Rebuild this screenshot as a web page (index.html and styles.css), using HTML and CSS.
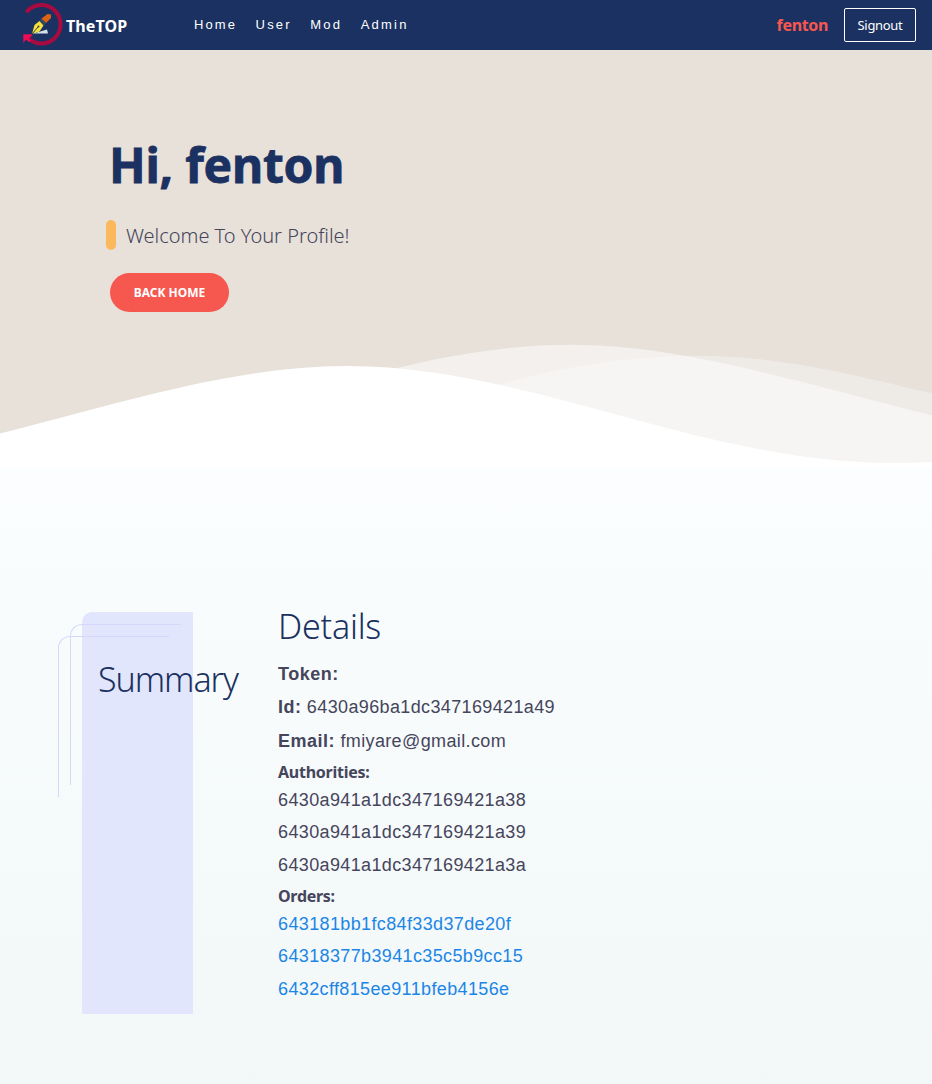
FILE: index.html
```html
<!DOCTYPE html>
<html lang="en">
<head>
<meta charset="utf-8">
<title>TheTOP - Profile</title>
<link rel="stylesheet" href="styles.css">
</head>
<body>
<header class="navbar">
  <a class="brand">
    <svg class="logo" width="44" height="48" viewBox="0 0 44 48">
      <path d="M6.500 10A19.200 19.200 0 1 1 7.500 37.500" fill="none" stroke="#a80b40" stroke-width="4" stroke-linecap="round"/>
      <path d="M2.300 42V33.300H11.300V34.500L7.500 37.500 10 39.500 8 41 5 38.500z" fill="#f00b55"/>
      <path d="M12.500 32.500L26 28.500l1 4z" fill="#d5e2e9"/>
      <path d="M11 33l2.500-9 5-4 4 4.500-4 6z" fill="#f7e23b"/>
      <path d="M11 33l6-7" stroke="#27435c" stroke-width="1"/>
      <circle cx="17.500" cy="25.500" r="1" fill="#27435c"/>
      <path d="M18.500 19.500l2-2 4.500 5-2 2z" fill="#344c60"/>
      <path d="M20.500 17.500L26.500 13l3.500.5v3.500L25 22z" fill="#dc6112"/>
    </svg>
    <span class="brand-name">TheTOP</span>
  </a>
  <nav class="links"><a>Home</a><a>User</a><a>Mod</a><a>Admin</a></nav>
  <div class="account"><span class="user">fenton</span><button class="signout">Signout</button></div>
</header>
<section class="hero">
  <div class="hero-copy">
    <h1>Hi, fenton</h1>
    <p class="lead"><span class="accent"></span><span class="lead-text">Welcome To Your Profile!</span></p>
    <a class="home-button">BACK HOME</a>
  </div>
  <svg class="waves" width="932" height="128" viewBox="0 340 932 128">
    <path d="M500 384C566 366 630 355.700 696 355.700C780 355.700 850 374 932 393.300V468H500z" fill="#fbffff" fill-opacity=".32"/>
    <path d="M350 380C430 358 500 344.700 572 344.700C680 344.700 796 381 932 415.500V468H350z" fill="#fff" fill-opacity=".5"/>
    <path d="M0 433.500C117 404 233 366 347 366C530 366 700 463 893 463Q912 463 932 461.700V468H0z" fill="#fff"/>
  </svg>
</section>
<main class="profile">
  <aside class="summary">
    <span class="frame frame-inner"></span>
    <span class="frame frame-outer"></span>
    <h2 class="summary-title">Summary</h2>
  </aside>
  <section class="details">
    <h2 class="details-title">Details</h2>
    <p class="field"><strong>Token:</strong></p>
    <p class="field"><strong>Id:</strong> 6430a96ba1dc347169421a49</p>
    <p class="field"><strong>Email:</strong> fmiyare@gmail.com</p>
    <h3 class="auth-title">Authorities:</h3>
    <ul class="list"><li>6430a941a1dc347169421a38</li><li>6430a941a1dc347169421a39</li><li>6430a941a1dc347169421a3a</li></ul>
    <h3 class="orders-title">Orders:</h3>
    <ul class="list orders"><li>643181bb1fc84f33d37de20f</li><li>64318377b3941c35c5b9cc15</li><li>6432cff815ee911bfeb4156e</li></ul>
  </section>
</main>
</body>
</html>
```
FILE: styles.css
```css
* { box-sizing: border-box; }
body { margin: 0; color: #45455b; font-family: "Liberation Sans", Arial, sans-serif; background: #fff; }
h1, h2, h3, p, ul { margin: 0; padding: 0; }
ul { list-style: none; }
.navbar { display: flex; align-items: center; height: 50px; padding: 0 16px 0 21px; background: #1a3161; color: #fff; }
.brand { display: flex; align-items: center; width: 173px; }
.logo { display: block; flex: none; margin-top: -1px; }
.brand-name { margin: 1px 0 0 1px; font: 700 16px/22px "Noto Sans", sans-serif; letter-spacing: .1px; }
.links { display: flex; gap: 17px; font-size: 13px; line-height: 20px; letter-spacing: 2.1px; }
.links a:nth-child(n+2) { letter-spacing: 2.2px; margin-left: 1.5px; }
.account { display: flex; align-items: center; gap: 16px; margin-left: auto; font-family: "Noto Sans", sans-serif; }
.user { color: #f6574f; font-size: 16px; font-weight: 700; letter-spacing: -.35px; }
.signout { width: 72px; height: 34px; padding: 0; border: 1px solid #fff; border-radius: 2px; background: none; color: #fff; font: 400 13px "Noto Sans", sans-serif; letter-spacing: -.3px; }
.hero { display: flex; flex-direction: column; justify-content: space-between; height: 418px; background: #e8e1da; }
.hero-copy { padding: 82px 0 0 110px; }
h1 { margin-left: -1px; color: #1a3161; font: 700 48px/66px "Noto Sans", sans-serif; letter-spacing: -.25px; -webkit-text-stroke: .8px #1a3161; }
.lead { display: flex; align-items: center; gap: 10px; height: 30px; margin: 22px 0 23px -4px; font: 300 20px/30px "Noto Sans", sans-serif; letter-spacing: -.02px; }
.lead-text { padding-top: 1px; }
.accent { width: 10px; height: 30px; border-radius: 5px; background: #fbb85c; }
.home-button { display: flex; align-items: center; justify-content: center; width: 119px; height: 39px; border-radius: 20px; background: #f6574f; color: #fff; font: 700 12px "Noto Sans", sans-serif; }
.waves { display: block; }
.profile { display: flex; gap: 85px; height: 616px; padding: 144px 0 70px 82px; background: linear-gradient(#fbfdfe, #f7fbfc 40%, #f2f7f8); }
.summary { position: relative; width: 111px; padding: 43px 0 0 16px; border-top-left-radius: 10px; background: #e2e6fc; }
.frame { position: absolute; width: 111px; height: 161px; border: solid #d5d8fd; border-width: 1px 0 0 1px; border-top-left-radius: 12px; }
.frame-inner { left: -12px; top: 12px; }
.frame-outer { left: -24px; top: 24px; }
h2 { color: #1a3161; font: 300 34px/48px "Noto Sans", sans-serif; white-space: nowrap; }
.summary-title { position: relative; letter-spacing: -1.05px; }
.details { margin-top: -10px; }
.details-title { margin-bottom: 7.500px; letter-spacing: -.2px; }
.field, .list { font-size: 18px; letter-spacing: .37px; }
.field strong { letter-spacing: .5px; }
.field { height: 33.500px; line-height: 33.500px; white-space: nowrap; }
h3 { font: 700 16px/24px "Noto Sans", sans-serif; letter-spacing: -.25px; }
.auth-title { margin-top: 1.500px; }
.orders-title { margin-top: 2.700px; letter-spacing: -.3px; }
.list li { line-height: 32.500px; }
.orders { color: #1c86e6; }
```
